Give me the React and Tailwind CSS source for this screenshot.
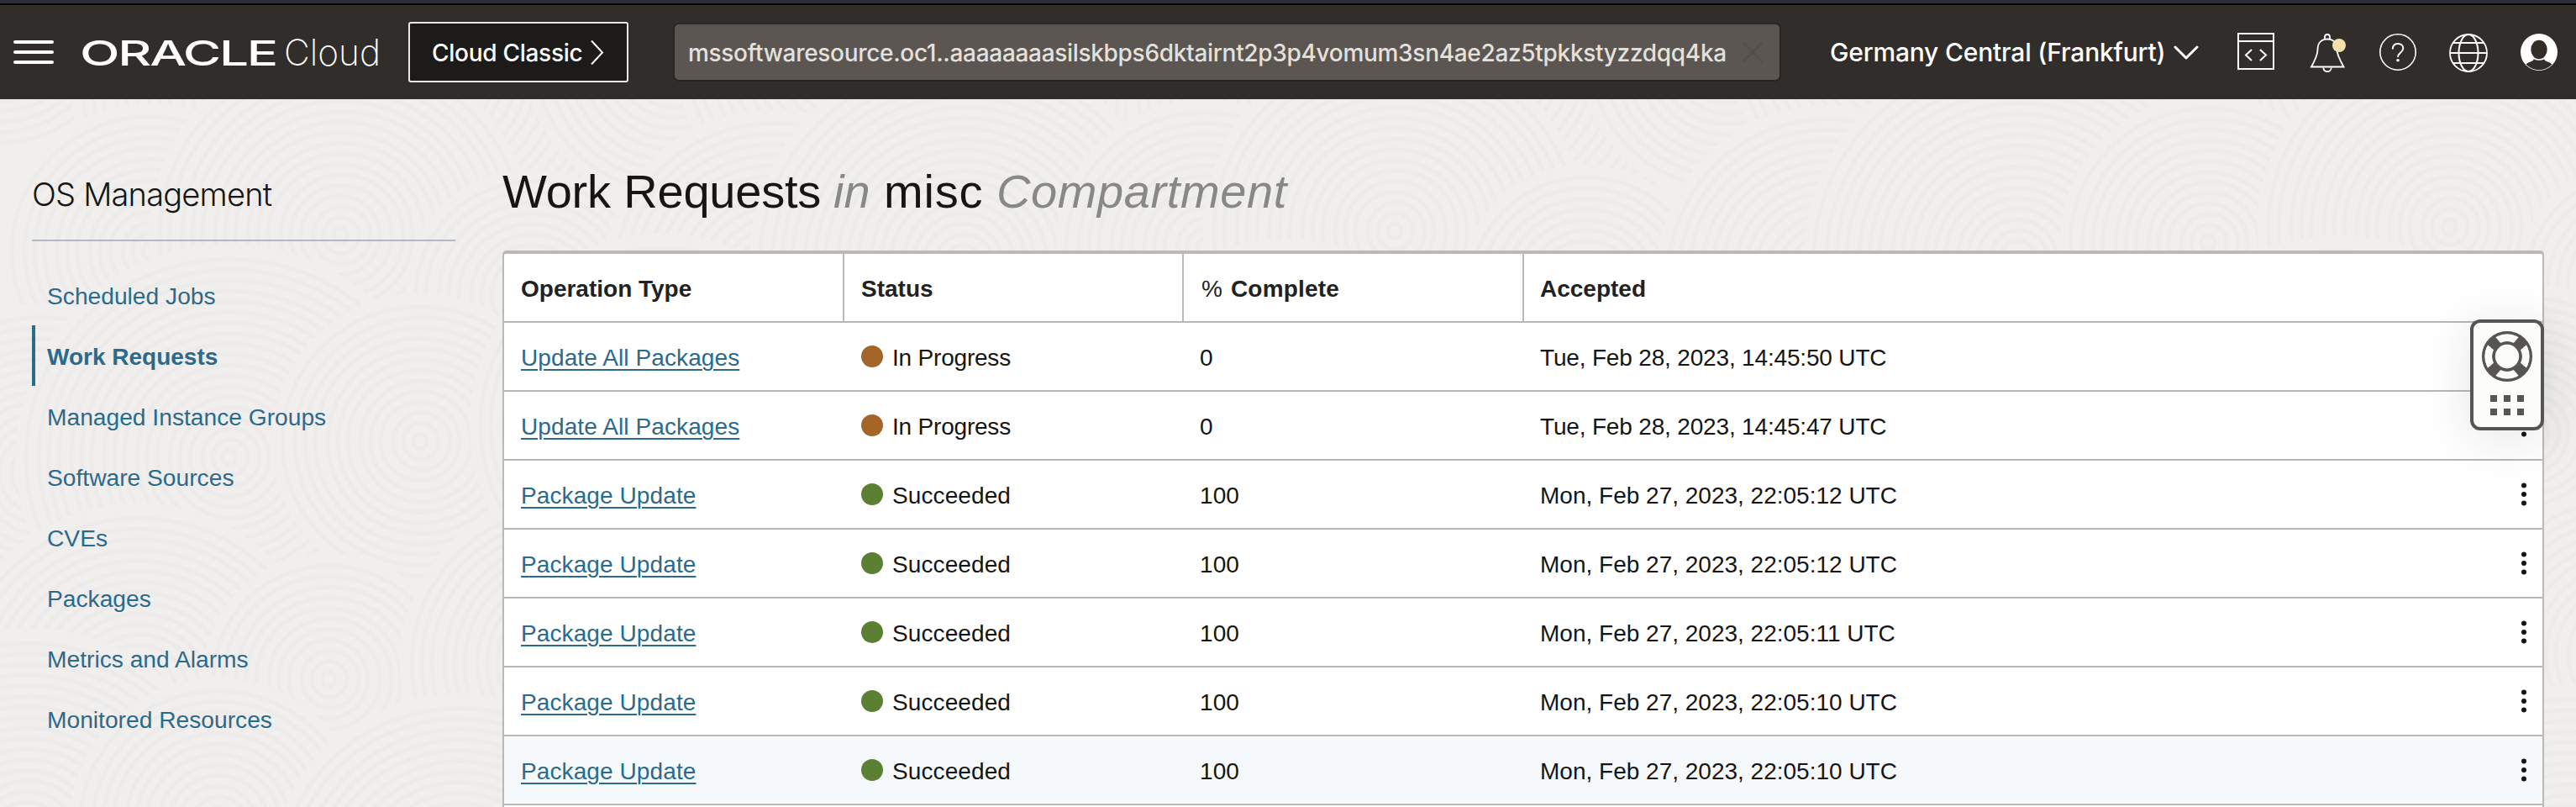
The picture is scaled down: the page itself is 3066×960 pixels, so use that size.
const NAV = [
  "Scheduled Jobs",
  "Work Requests",
  "Managed Instance Groups",
  "Software Sources",
  "CVEs",
  "Packages",
  "Metrics and Alarms",
  "Monitored Resources",
];

const ROWS = [
  { type: "Update All Packages", done: false, accepted: "Tue, Feb 28, 2023, 14:45:50 UTC" },
  { type: "Update All Packages", done: false, accepted: "Tue, Feb 28, 2023, 14:45:47 UTC" },
  { type: "Package Update", done: true, accepted: "Mon, Feb 27, 2023, 22:05:12 UTC" },
  { type: "Package Update", done: true, accepted: "Mon, Feb 27, 2023, 22:05:12 UTC" },
  { type: "Package Update", done: true, accepted: "Mon, Feb 27, 2023, 22:05:11 UTC" },
  { type: "Package Update", done: true, accepted: "Mon, Feb 27, 2023, 22:05:10 UTC" },
  { type: "Package Update", done: true, accepted: "Mon, Feb 27, 2023, 22:05:10 UTC", hover: true },
];

// Overlapping discs of concentric rings that make up the page texture
const DISCS = [];
for (let iy = 0; iy < 5; iy++) {
  for (let ix = 0; ix < 14; ix++) {
    const k = (ix * 7 + iy * 11) % 5;
    DISCS.push({
      cx: 155 + ix * 250 - 125 + (iy % 2) * 125 + ((ix * 37 + iy * 53) % 60) - 30,
      cy: 80 + iy * 235 + ((ix * 71 + iy * 29) % 90) - 45,
      r: 150 + k * 26,
    });
  }
}

function Texture() {
  return (
    <svg className="absolute inset-0" width="3066" height="842" viewBox="0 118 3066 842" aria-hidden="true">
      {DISCS.map((d, i) => (
        <g key={i} fill="none" stroke="#ecebe9" strokeWidth="5">
          <circle cx={d.cx} cy={d.cy} r={d.r} fill="#f0efed" stroke="none" />
          {Array.from({ length: Math.floor(d.r / 13) }, (_, n) => (
            <ellipse key={n} cx={d.cx + (n % 3)} cy={d.cy} rx={8 + n * 13} ry={9 + n * 12.6} />
          ))}
        </g>
      ))}
    </svg>
  );
}

function Logo() {
  return (
    <svg className="ml-[30px] shrink-0" width="364" height="60" viewBox="-4 0 364 60" fill="#fff">
      <text x="-3" y="46" textLength="234" lengthAdjust="spacingAndGlyphs" className="font-['Inter',sans-serif] text-[41.5px] font-medium tracking-[-1.5px]">ORACLE</text>
      <text x="240" y="46" textLength="115" lengthAdjust="spacingAndGlyphs" className="font-['Inter',sans-serif] text-[43px] font-extralight">Cloud</text>
    </svg>
  );
}

function HeaderIcons() {
  return (
    <svg className="shrink-0" width="404" height="60" viewBox="2662 32 404 60" fill="none" stroke="#fff" strokeWidth="2">
      <rect x="2664" y="40" width="42" height="42" />
      <path d="M2664 49h42" />
      <path d="M2680 59l-7 6.500 7 6.500M2690 59l7 6.500-7 6.500" />
      <path d="M2751 79.500h38.500c-4.500-8-8-14-8-20.500 0-9-5.500-12.500-11.500-12.500s-11.500 3.500-11.500 12.500c0 6.500-3 12.500-7.500 20.500z" strokeWidth="1.800" />
      <path d="M2767 46.500v-2.500a3 3 0 0 1 6 0v2.500M2765.300 80.500a4.700 4.700 0 0 0 9.400 0" strokeWidth="1.800" />
      <circle cx="2784" cy="54" r="8" fill="#f4e0a8" stroke="none" />
      <circle cx="2854" cy="62" r="21.200" strokeWidth="1.600" />
      <path d="M2847.800 58.500c0-4 2.400-6.500 6.200-6.500s6.300 2.300 6.300 5.600c0 5-6.300 5-6.300 10.400" />
      <circle cx="2854" cy="71.800" r="1.800" fill="#fff" stroke="none" />
      <circle cx="2938" cy="63" r="22" strokeWidth="1.800" />
      <ellipse cx="2938" cy="63" rx="11.500" ry="22" />
      <path d="M2916 63h44M2920 51h36M2920 75h36" />
      <circle cx="3022" cy="62" r="22" fill="#fff" stroke="none" />
      <path d="M3006.500 76.500C3010 73 3014 74 3016 70.500h12c2 3.500 6 2.500 9.500 6a21 21 0 0 1-31 0z" fill="#312d2a" stroke="none" />
      <path d="M3016.500 65h11v5.500a6 2 0 0 1-11 0z" fill="#fff" stroke="none" />
      <ellipse cx="3022" cy="59" rx="9.700" ry="11.300" fill="#312d2a" stroke="none" />
    </svg>
  );
}

function Header() {
  return (
    <header className="flex h-28 shrink-0 items-center bg-[#312d2a] pl-4 font-['Inter',sans-serif] font-[450] text-white">
      <div className="flex w-12 shrink-0 flex-col gap-2">
        <span className="h-1 rounded-full bg-white" />
        <span className="h-1 rounded-full bg-white" />
        <span className="h-1 rounded-full bg-white" />
      </div>
      <Logo />
      <button className="ml-7 flex h-[72px] w-[262px] shrink-0 items-center rounded-[3px] border-2 border-[#ebe8e4] bg-[#1c1b19] pl-[26px] text-[28px] tracking-[-0.28px] whitespace-nowrap">
        <span className="w-[181px] pt-0.5 text-left">Cloud Classic</span>
        <svg className="ml-[7px]" width="18" height="30" viewBox="0 0 18 30" fill="none" stroke="#fff" strokeWidth="2">
          <path d="M2 1.500l13 14L2 29.500" />
        </svg>
      </button>
      <div className="ml-[53px] flex h-[70px] w-[1319px] shrink-0 items-center rounded-[7px] border-2 border-[#292522] bg-[#5b5652] pl-4 text-[28px] tracking-[-0.31px] whitespace-nowrap text-[#e4e1dd]">
        <span className="w-[1236px] pt-0.5">mssoftwaresource.oc1..aaaaaaaasilskbps6dktairnt2p3p4vomum3sn4ae2az5tpkkstyzzdqq4ka</span>
        <svg className="ml-[18px] shrink-0" width="26" height="26" viewBox="0 0 26 26" stroke="#524e4c" strokeWidth="1.800">
          <path d="M1 1l24 24M25 1L1 25" />
        </svg>
      </div>
      <div className="ml-[58px] flex w-[484px] shrink-0 items-center text-[30px] tracking-[-0.2px] whitespace-nowrap">
        <span className="w-[400px]">Germany Central (Frankfurt)</span>
        <svg className="ml-[9px] mt-0.5" width="30" height="18" viewBox="0 0 30 18" fill="none" stroke="#fff" strokeWidth="3" strokeLinecap="round" strokeLinejoin="round">
          <path d="M2 2l13 13L28 2" />
        </svg>
      </div>
      <HeaderIcons />
    </header>
  );
}

function Sidebar() {
  return (
    <aside className="relative w-[598px] shrink-0 pl-[38px]">
      <h2 className="mt-[83px] h-[86px] w-[504px] border-b-2 border-[#b4b9c4] font-['Inter',sans-serif] text-[38px] leading-[60px] font-light tracking-[-0.8px]">
        OS Management
      </h2>
      <nav className="mt-7 flex flex-col">
        {NAV.map((label) =>
          label === "Work Requests" ? (
            <a key={label} className="flex h-[72px] items-center border-l-4 border-[#2c6a8c] pt-[3px] pl-[14px] text-[28px] font-bold text-[#2c6a8c]">{label}</a>
          ) : (
            <a key={label} className="flex h-[72px] items-center pt-[3px] pl-[18px] text-[28.2px] text-[#2c6a8c]">{label}</a>
          )
        )}
      </nav>
      <h2 className="mt-[65px] font-['Inter',sans-serif] text-[36px] leading-none font-light tracking-[-0.8px]">List Scope</h2>
    </aside>
  );
}

function Kebab() {
  return (
    <svg width="6" height="28" viewBox="0 0 6 28" fill="#161513">
      <circle cx="3" cy="3.400" r="3" />
      <circle cx="3" cy="14" r="3" />
      <circle cx="3" cy="24.600" r="3" />
    </svg>
  );
}

function WorkRequestsTable() {
  return (
    <div className="rounded-t-[5px] border-x-2 border-t-4 border-[#bab9b2] bg-white text-[28px] text-[#161513]">
      <div className="grid h-[82px] grid-cols-[405px_404px_405px_1fr] border-b-2 border-[#bab6b2] font-bold text-[#222]">
        <div className="flex items-center border-r-2 border-[#b7bac0] pt-[3px] pl-5">Operation Type</div>
        <div className="flex items-center border-r-2 border-[#b7bac0] pt-[3px] pl-5">Status</div>
        <div className="flex items-center border-r-2 border-[#b7bac0] pt-[3px] pl-[21px]">
          <span className="font-normal">%</span>
          <span className="ml-[10px] tracking-[0.2px]">Complete</span>
        </div>
        <div className="flex items-center pt-[3px] pl-[19px]">Accepted</div>
      </div>
      {ROWS.map((row, i) => (
        <div
          key={i}
          className={
            row.hover
              ? "grid h-[82px] grid-cols-[405px_404px_405px_1fr_42px] items-center border-b-2 border-[#bab6b2] bg-[#f5f9fc]"
              : "grid h-[82px] grid-cols-[405px_404px_405px_1fr_42px] items-center border-b-2 border-[#bab6b2]"
          }
        >
          <div className="pt-[3px] pl-5">
            <a className="tracking-[0.1px] text-[#2c6a8c] underline decoration-[1.5px] underline-offset-[4px]">{row.type}</a>
          </div>
          <div className="flex items-center gap-[11px] pl-5">
            <span className={row.done ? "size-[26px] rounded-full bg-[#5c8033]" : "size-[26px] rounded-full bg-[#a36628]"} />
            <span className={row.done ? "pt-[3px] tracking-[0.1px]" : "pt-[3px] tracking-[-0.2px]"}>{row.done ? "Succeeded" : "In Progress"}</span>
          </div>
          <div className="pt-[3px] pl-[19px] tracking-[0.1px]">{row.done ? 100 : 0}</div>
          <div className={row.done ? "pt-[3px] pl-[19px]" : "pt-[3px] pl-[19px] tracking-[-0.17px]"}>{row.accepted}</div>
          <div className="flex justify-center pr-0.5">
            <Kebab />
          </div>
        </div>
      ))}
      <div className="h-20" />
    </div>
  );
}

function SupportWidget() {
  return (
    <div className="absolute top-[380px] left-[2940px] flex h-[132px] w-[88px] flex-col items-center rounded-[12px] border-4 border-[#565551] bg-[#fcfcfb] pt-[10px] shadow-[0_8px_60px_rgba(30,30,60,0.12)]">
      <svg width="60" height="60" viewBox="0 0 60 60">
        <circle cx="30" cy="30" r="23" fill="none" stroke="#565551" strokeWidth="13" />
        {/* Gaps between the four diagonal grips */}
        <g fill="#fcfcfb">
          <path d="M16.200 7A27 27 0 0 1 43.800 7L37.800 14A17.500 17.500 0 0 0 22.200 14z" />
          <path d="M16.200 7A27 27 0 0 1 43.800 7L37.800 14A17.500 17.500 0 0 0 22.200 14z" transform="rotate(90 30 30)" />
          <path d="M16.200 7A27 27 0 0 1 43.800 7L37.800 14A17.500 17.500 0 0 0 22.200 14z" transform="rotate(180 30 30)" />
          <path d="M16.200 7A27 27 0 0 1 43.800 7L37.800 14A17.500 17.500 0 0 0 22.200 14z" transform="rotate(270 30 30)" />
        </g>
        <circle cx="30" cy="30" r="28.500" fill="none" stroke="#565551" strokeWidth="3" />
        <circle cx="30" cy="30" r="15.700" fill="#fcfcfb" stroke="#565551" strokeWidth="3" />
      </svg>
      <div className="mt-4 grid grid-cols-3 gap-2">
        {[0, 1, 2, 3, 4, 5].map((n) => (
          <span key={n} className="size-2 bg-[#565551]" />
        ))}
      </div>
    </div>
  );
}

export default function App() {
  return (
    <div className="relative flex h-[960px] w-[3066px] flex-col overflow-hidden bg-[#f0efed] font-['Liberation_Sans',Arial,sans-serif] text-[#161513]">
      <div className="h-1 shrink-0 bg-[#2e2c38]" />
      <div className="h-0.5 shrink-0 bg-[#050505]" />
      <Header />
      <div className="relative flex min-h-0 flex-1 overflow-hidden">
        <Texture />
        <Sidebar />
        <main className="relative w-[2430px] shrink-0">
          <h1 className="mt-[76px] flex h-[104px] text-[56px] leading-[67px] whitespace-nowrap">
            <span className="w-[394px] tracking-[-0.2px]">Work Requests</span>
            <span className="w-[60px] text-[#888886] italic">in</span>
            <span className="w-[134px] tracking-[0.8px]">misc</span>
            <span className="tracking-[0.6px] text-[#888886] italic">Compartment</span>
          </h1>
          <WorkRequestsTable />
        </main>
      </div>
      <SupportWidget />
    </div>
  );
}
